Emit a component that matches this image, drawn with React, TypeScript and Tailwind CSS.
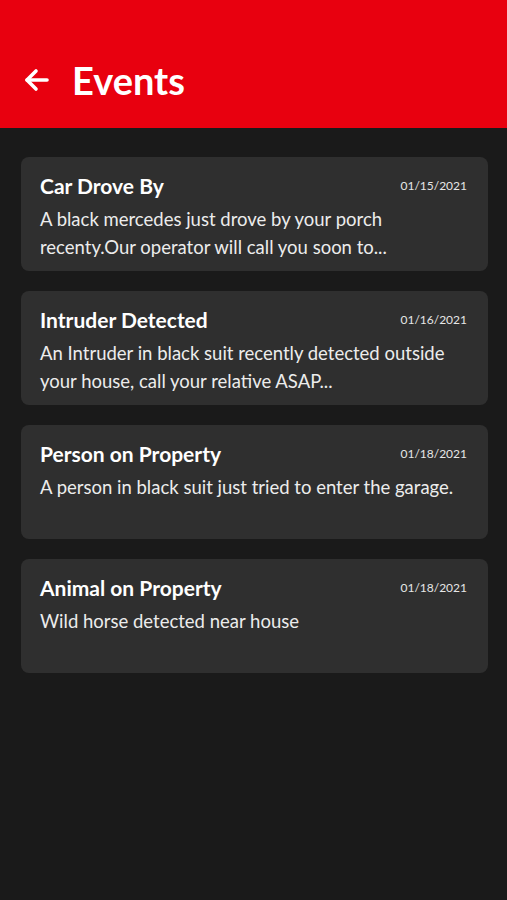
import React from 'react';

type EventItem = {
  title: string;
  date: string;
  body: string;
};

const events: EventItem[] = [
  {
    title: 'Car Drove By',
    date: '01/15/2021',
    body: 'A black mercedes just drove by your porch recenty.Our operator will call you soon to...',
  },
  {
    title: 'Intruder Detected',
    date: '01/16/2021',
    body: 'An Intruder in black suit recently detected outside your house, call your relative ASAP...',
  },
  {
    title: 'Person on Property',
    date: '01/18/2021',
    body: 'A person in black suit just tried to enter the garage.',
  },
  {
    title: 'Animal on Property',
    date: '01/18/2021',
    body: 'Wild horse detected near house',
  },
];

function EventCard({ item }: { item: EventItem }) {
  return (
    <div className="h-[114px] rounded-lg bg-[#2f2f2f] pl-[19px] pr-[21px] pt-[17px]">
      <div className="flex items-center justify-between">
        <h2 className="text-[21px] leading-[24px] font-bold text-white">{item.title}</h2>
        <span className="text-[12px] text-[#e6e6e6]">{item.date}</span>
      </div>
      <p className="mt-[7px] text-[18.5px] leading-[28px] text-[#ececec]">{item.body}</p>
    </div>
  );
}

function App() {
  return (
    <div className="min-h-screen bg-[#1a1a1a] font-['Lato','Noto_Sans',sans-serif]">
      <header className="flex h-[128px] items-center gap-[22px] bg-[#e8000f] px-[24px] pt-[32px]">
        <svg width="26" height="24" viewBox="0 0 26 24" fill="none" stroke="white" strokeWidth="3.6" strokeLinecap="round" strokeLinejoin="round">
          <path d="M23 12H3" />
          <path d="M12 3l-9 9 9 9" />
        </svg>
        <h1 className="text-[38px] leading-[44px] font-bold text-white">Events</h1>
      </header>
      <main className="flex flex-col gap-[20px] px-[21px] pt-[29px] pr-[19px]">
        {events.map((e) => (
          <EventCard key={e.title} item={e} />
        ))}
      </main>
    </div>
  );
}

export default App;
